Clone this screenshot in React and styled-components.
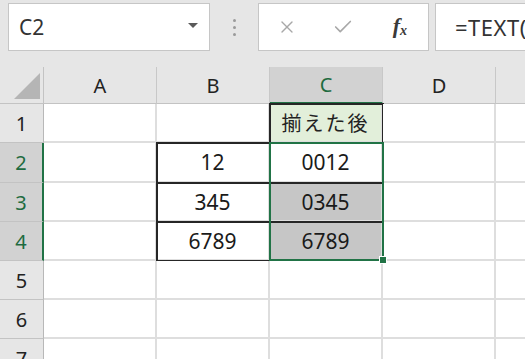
import styled, { createGlobalStyle } from "styled-components";
import { X, Check } from "lucide-react";

const GlobalStyle = createGlobalStyle`
  html, body {
    margin: 0;
    padding: 0;
    background: #fff;
  }
  body {
    font-family: "Noto Sans", "Noto Sans CJK JP", sans-serif;
  }
`;

const Page = styled.div`
  width: 525px;
  height: 359px;
  overflow: hidden;
  background: #fff;
`;

const Toolbar = styled.div`
  height: 67px;
  box-sizing: border-box;
  padding: 3px 0 0 8px;
  background: #e6e6e6;
  display: flex;
  align-items: flex-start;
`;

const NameBox = styled.div`
  flex: none;
  width: 202px;
  height: 48px;
  box-sizing: border-box;
  background: #fff;
  border: 1px solid #c6c6c6;
  display: flex;
  align-items: center;
  justify-content: space-between;
  padding: 0 11px 0 10px;
  font-size: 21px;
  color: #333;
`;

const DropArrow = styled.span`
  width: 0;
  height: 0;
  border-left: 5px solid transparent;
  border-right: 5px solid transparent;
  border-top: 5px solid #5a5a5a;
  margin-top: -4px;
`;

const Divider = styled.div`
  flex: none;
  width: 48px;
  height: 48px;
  display: flex;
  flex-direction: column;
  align-items: center;
  justify-content: center;
  gap: 4px;
`;

const Dot = styled.span`
  width: 3px;
  height: 3px;
  border-radius: 50%;
  background: #9a9a9a;
`;

const ButtonBox = styled.div`
  flex: none;
  width: 171px;
  height: 48px;
  box-sizing: border-box;
  background: #fff;
  border: 1px solid #c6c6c6;
  display: flex;
`;

const ToolButton = styled.div`
  flex: 1;
  display: flex;
  align-items: center;
  justify-content: center;
  color: ${({ $dark }) => ($dark ? "#333" : "#a8a8a8")};
`;

const Fx = styled.span`
  font-family: "Liberation Serif", serif;
  font-style: italic;
  font-weight: bold;
  font-size: 22px;
  color: #3a3a3a;
  margin-top: -3px;
  sub {
    font-size: 14px;
    vertical-align: -2px;
  }
`;

const FormulaBox = styled.div`
  flex: 1 0 120px;
  margin-left: 6px;
  height: 48px;
  box-sizing: border-box;
  background: #fff;
  border: 1px solid #c6c6c6;
  border-right: none;
  display: flex;
  align-items: center;
  padding-left: 19px;
  font-size: 22px;
  letter-spacing: 0.5px;
  color: #333;
  white-space: nowrap;
  overflow: hidden;
`;

const Sheet = styled.div`
  display: grid;
  grid-template-columns: 44px repeat(5, 113px);
  grid-template-rows: 37px 39px 40px 39px 39px 39px 39px 39px;
  background: #fff;
`;

const Corner = styled.div`
  grid-row: 1;
  grid-column: 1;
  background: #e6e6e6;
  border-right: 1px solid #c3c3c3;
  border-bottom: 1px solid #c3c3c3;
  display: flex;
  align-items: flex-end;
  justify-content: flex-end;
  padding: 0 3px 4px 0;
`;

const CornerMark = styled.span`
  width: 0;
  height: 0;
  border-left: 26px solid transparent;
  border-bottom: 26px solid #b5b5b5;
`;

const ColHead = styled.div`
  grid-row: 1;
  grid-column: ${({ $col }) => $col};
  background: ${({ $active }) => ($active ? "#d2d2d2" : "#e6e6e6")};
  border-right: 1px solid #c8c8c8;
  border-bottom: ${({ $active }) => ($active ? "2px solid #217346" : "1px solid #c3c3c3")};
  color: ${({ $active }) => ($active ? "#1e6b40" : "#222")};
  font-size: 20px;
  display: flex;
  align-items: center;
  justify-content: center;
`;

const RowHead = styled.div`
  grid-row: ${({ $row }) => $row};
  grid-column: 1;
  background: ${({ $active }) => ($active ? "#d2d2d2" : "#e6e6e6")};
  border-right: ${({ $active }) => ($active ? "2px solid #217346" : "1px solid #b8b8b8")};
  border-bottom: 1px solid #c3c3c3;
  color: ${({ $active }) => ($active ? "#1e6b40" : "#222")};
  font-size: 20px;
  display: flex;
  align-items: center;
  justify-content: center;
`;

const Cell = styled.div`
  grid-row: ${({ $row }) => $row};
  grid-column: ${({ $col }) => $col};
  background: ${({ $fill }) => $fill || "#fff"};
  border-right: 2px solid #dedede;
  border-bottom: 2px solid #dedede;
  color: #1a1a1a;
  font-size: 21px;
  display: flex;
  align-items: center;
  justify-content: center;
  ${({ $boxed }) => $boxed && "outline: 2px solid #262626; outline-offset: -1px;"}
`;

const JpText = styled.span`
  font-family: "Noto Sans CJK JP", sans-serif;
  font-size: 20px;
  letter-spacing: 2px;
  color: #222;
`;

const Selection = styled.div`
  grid-column: 4;
  grid-row: 3 / 6;
  margin: -1px -1px 0 -1px;
  border: 2px solid #217346;
  position: relative;
  z-index: 1;
  pointer-events: none;
`;

const FillHandle = styled.span`
  position: absolute;
  right: -5px;
  bottom: -5px;
  width: 6px;
  height: 6px;
  background: #217346;
  border: 1px solid #fff;
`;

const columns = ["A", "B", "C", "D", "E"];

const rows = [
  { n: 1, cells: { C: { jp: "揃えた後", fill: "#e2efda", boxed: true } } },
  { n: 2, active: true, cells: { B: { text: "12", boxed: true }, C: { text: "0012", boxed: true } } },
  { n: 3, active: true, cells: { B: { text: "345", boxed: true }, C: { text: "0345", boxed: true, fill: "#c6c6c6" } } },
  { n: 4, active: true, cells: { B: { text: "6789", boxed: true }, C: { text: "6789", boxed: true, fill: "#c6c6c6" } } },
  { n: 5, cells: {} },
  { n: 6, cells: {} },
  { n: 7, cells: {} },
];

export default function App() {
  return (
    <Page>
      <GlobalStyle />
      <Toolbar>
        <NameBox>
          <span>C2</span>
          <DropArrow />
        </NameBox>
        <Divider>
          <Dot />
          <Dot />
          <Dot />
        </Divider>
        <ButtonBox>
          <ToolButton>
            <X size={20} strokeWidth={1.6} />
          </ToolButton>
          <ToolButton>
            <Check size={22} strokeWidth={1.8} />
          </ToolButton>
          <ToolButton $dark>
            <Fx>
              f<sub>x</sub>
            </Fx>
          </ToolButton>
        </ButtonBox>
        <FormulaBox>=TEXT(B2,"0000")</FormulaBox>
      </Toolbar>
      <Sheet>
        <Corner>
          <CornerMark />
        </Corner>
        {columns.map((c, i) => (
          <ColHead key={c} $col={i + 2} $active={c === "C"}>
            {c}
          </ColHead>
        ))}
        {rows.map((row) => [
          <RowHead key={`h${row.n}`} $row={row.n + 1} $active={row.active}>
            {row.n}
          </RowHead>,
          ...columns.map((c, i) => {
            const cell = row.cells[c] || {};
            return (
              <Cell
                key={`${c}${row.n}`}
                $row={row.n + 1}
                $col={i + 2}
                $fill={cell.fill}
                $boxed={cell.boxed}
              >
                {cell.jp ? <JpText>{cell.jp}</JpText> : cell.text}
              </Cell>
            );
          }),
        ])}
        <Selection>
          <FillHandle />
        </Selection>
      </Sheet>
    </Page>
  );
}
